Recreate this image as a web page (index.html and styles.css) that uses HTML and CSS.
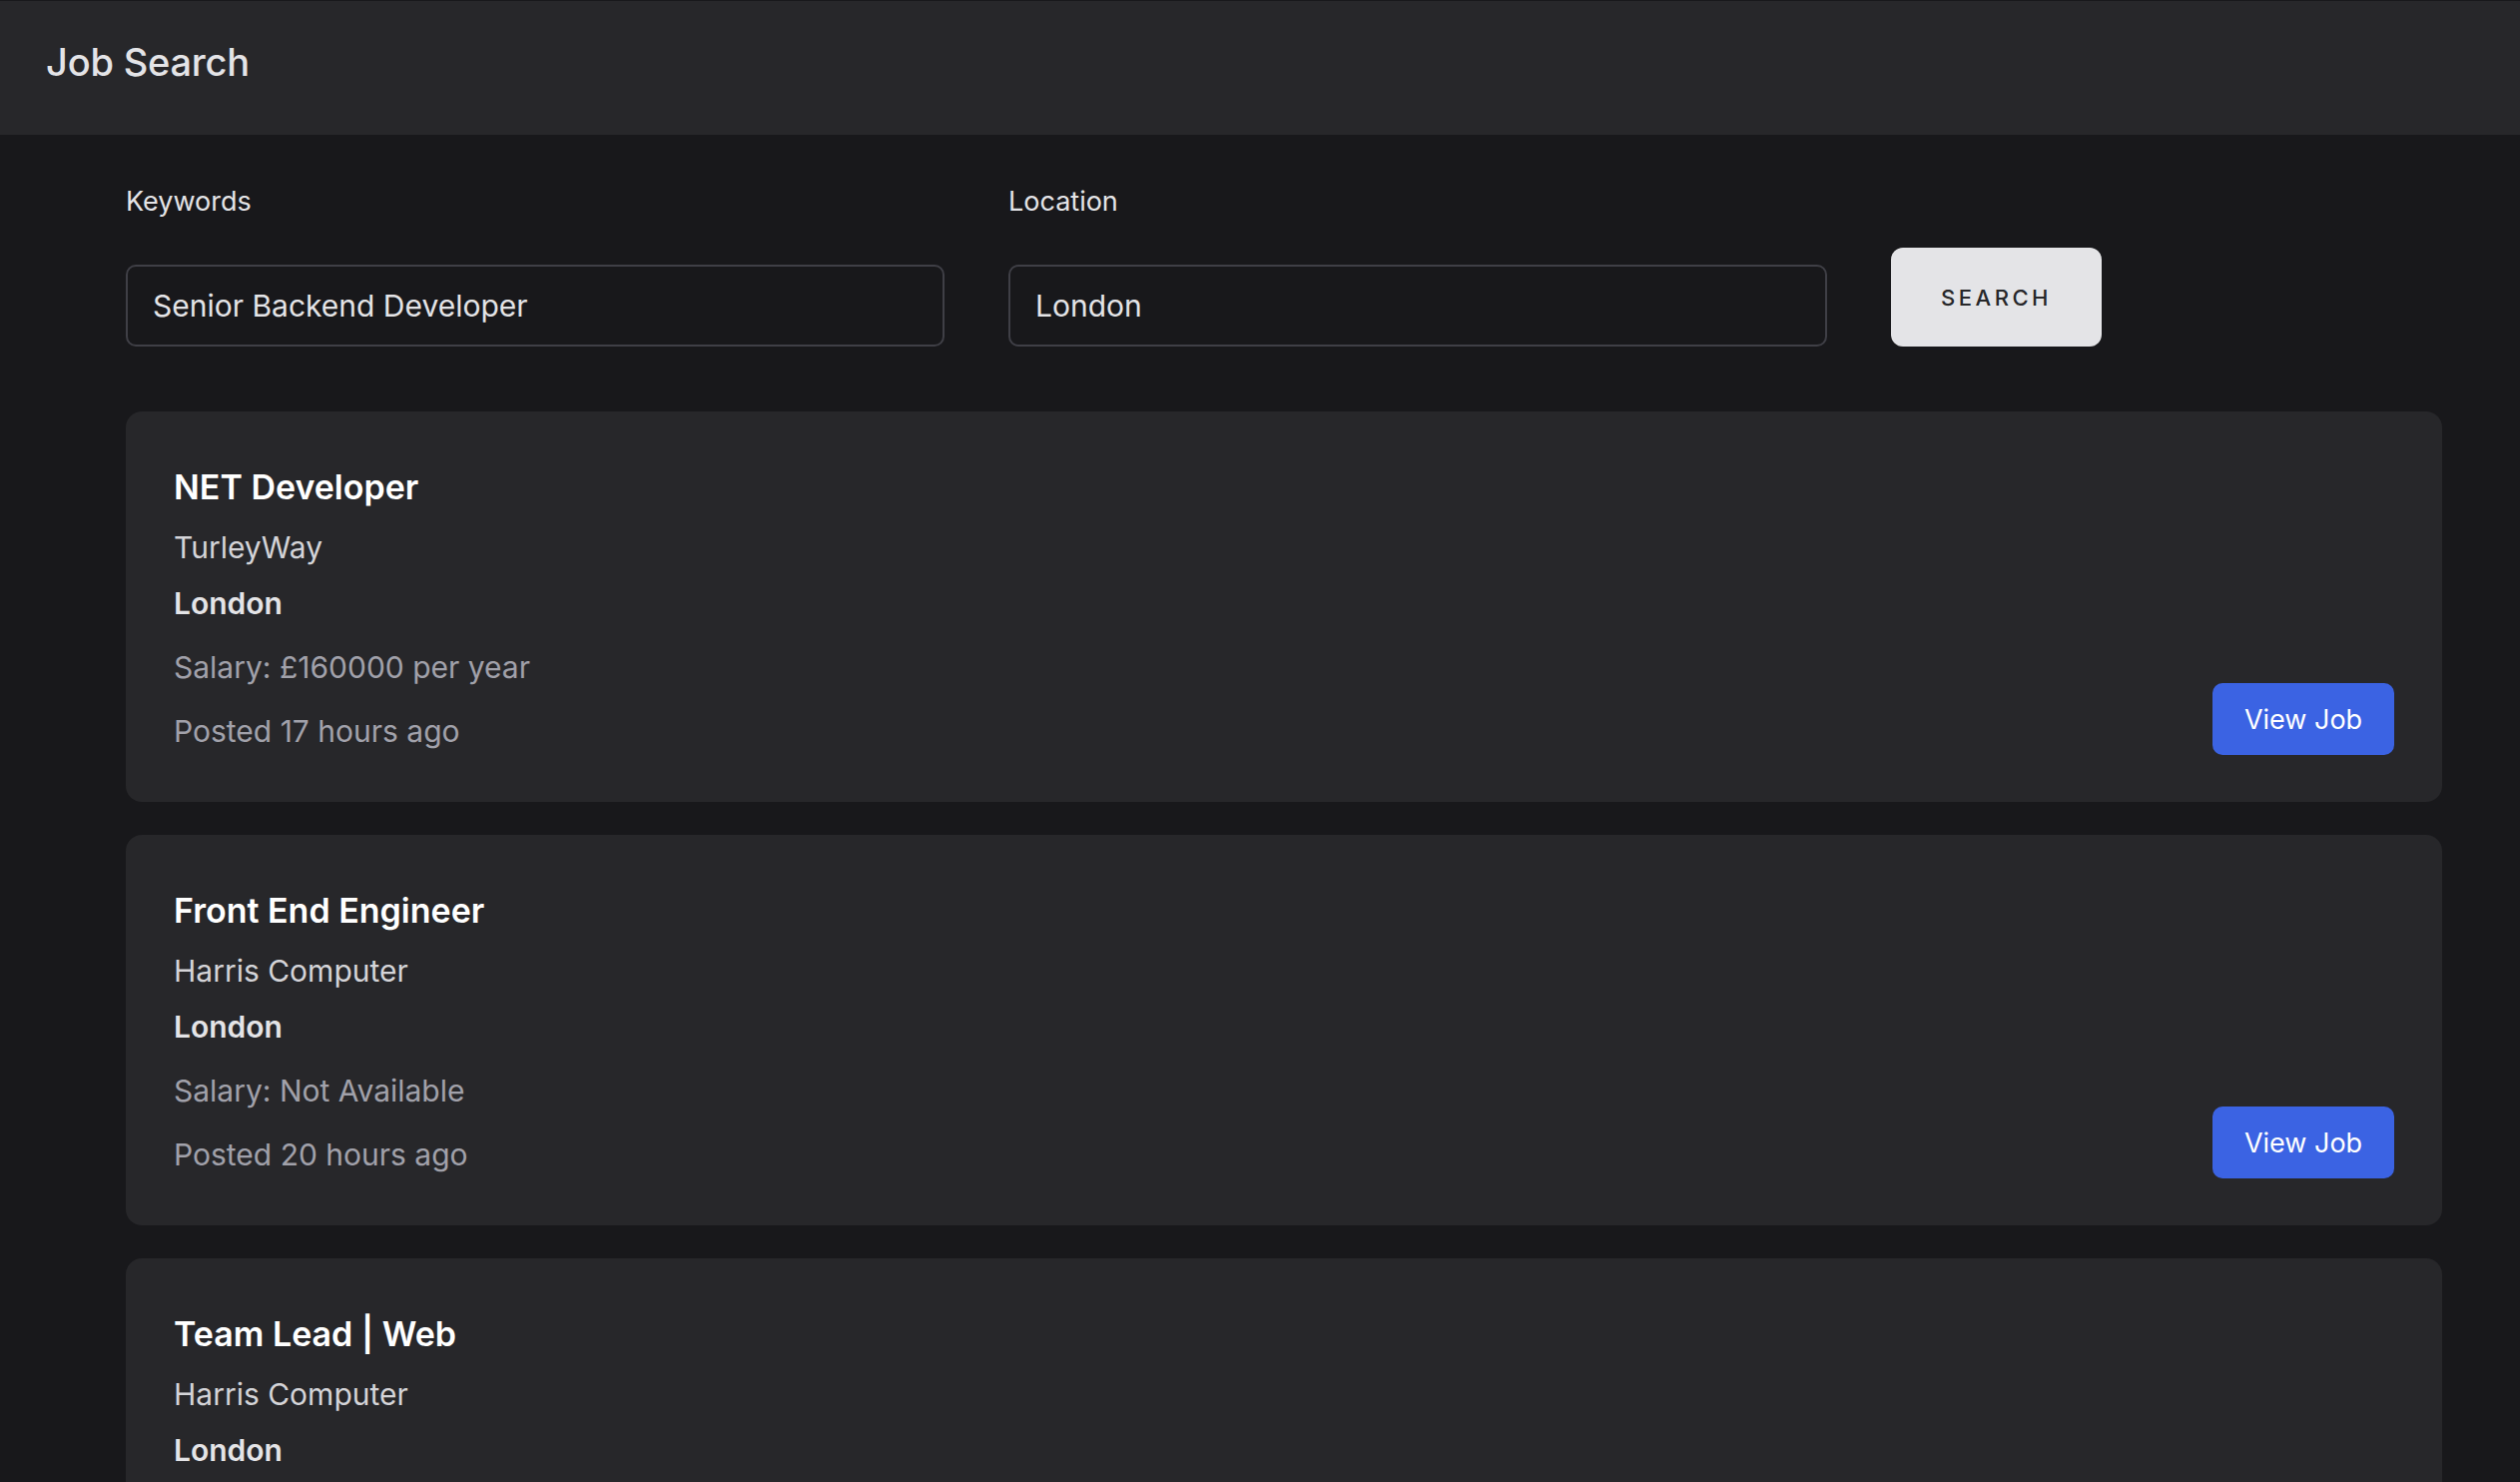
FILE: index.html
```html
<!DOCTYPE html>
<html lang="en">
<head>
    <meta charset="UTF-8">
    <meta name="viewport" content="width=device-width, initial-scale=1.0">
    <title>Job Search</title>
    <link rel="stylesheet" href="styles.css">
</head>
<body>
    <header class="app-bar">
        <h1>Job Search</h1>
    </header>
    <main class="content">
        <form class="search-form" onsubmit="return false">
            <div class="field">
                <label for="keywords">Keywords</label>
                <input type="text" id="keywords" value="Senior Backend Developer">
            </div>
            <div class="field">
                <label for="location">Location</label>
                <input type="text" id="location" value="London">
            </div>
            <button type="submit" class="search-button">Search</button>
        </form>

        <div class="job-list">
            <div class="job-card">
                <div class="job-info">
                    <h2 class="job-title">NET Developer</h2>
                    <p class="job-company">TurleyWay</p>
                    <p class="job-location">London</p>
                    <p class="job-meta">Salary: £160000 per year</p>
                    <p class="job-meta">Posted 17 hours ago</p>
                </div>
                <a href="#" class="view-button">View Job</a>
            </div>
            <div class="job-card">
                <div class="job-info">
                    <h2 class="job-title">Front End Engineer</h2>
                    <p class="job-company">Harris Computer</p>
                    <p class="job-location">London</p>
                    <p class="job-meta">Salary: Not Available</p>
                    <p class="job-meta">Posted 20 hours ago</p>
                </div>
                <a href="#" class="view-button">View Job</a>
            </div>
            <div class="job-card">
                <div class="job-info">
                    <h2 class="job-title">Team Lead | Web</h2>
                    <p class="job-company">Harris Computer</p>
                    <p class="job-location">London</p>
                    <p class="job-meta">Salary: Not Available</p>
                    <p class="job-meta">Posted 20 hours ago</p>
                </div>
                <a href="#" class="view-button">View Job</a>
            </div>
        </div>
    </main>
</body>
</html>
```

FILE: styles.css
```css
* {
    margin: 0;
    padding: 0;
    box-sizing: border-box;
    font-family: 'Inter', 'Noto Sans', sans-serif;
}

body {
    min-height: 100vh;
    background: #18181b;
    color: #e4e4e7;
    border-top: 1px solid #18181b;
}

.app-bar {
    height: 134px;
    background: #27272a;
    display: flex;
    align-items: center;
    padding: 0 0 12px 46px;
}

.app-bar h1 {
    font-size: 38px;
    font-weight: 500;
    color: #e4e4e7;
    letter-spacing: -0.2px;
}

.content {
    padding: 49px 78px 40px 126px;
}

.search-form {
    display: flex;
    align-items: flex-end;
    gap: 64px;
}

.field {
    width: 820px;
}

.field label {
    display: block;
    font-size: 27px;
    line-height: 36px;
    color: #e4e4e7;
    margin-bottom: 45px;
}

.field input {
    width: 100%;
    height: 82px;
    padding: 0 25px;
    background: #18181b;
    border: 2px solid #3f3f46;
    border-radius: 10px;
    color: #e4e4e7;
    font-size: 30px;
    outline: none;
}

.search-button {
    width: 211px;
    height: 99px;
    background: #e4e4e7;
    border: none;
    border-radius: 12px;
    color: #27272a;
    font-size: 22px;
    font-weight: 500;
    letter-spacing: 3.5px;
    text-transform: uppercase;
    cursor: pointer;
}

.job-list {
    margin-top: 65px;
    display: flex;
    flex-direction: column;
    gap: 33px;
}

.job-card {
    background: #27272a;
    border-radius: 16px;
    padding: 48px 48px 47px;
    display: flex;
    justify-content: space-between;
    align-items: flex-end;
}

.job-info {
    padding-bottom: 4px;
}

.job-title {
    font-size: 34px;
    line-height: 56px;
    font-weight: 600;
    color: #fff;
}

.job-company {
    font-size: 30px;
    line-height: 40px;
    margin-top: 12px;
    color: #d4d4d8;
}

.job-location {
    font-size: 30px;
    line-height: 40px;
    margin-top: 16px;
    font-weight: 600;
    color: #e4e4e7;
}

.job-meta {
    font-size: 30px;
    line-height: 40px;
    margin-top: 24px;
    color: #a1a1aa;
}

.view-button {
    display: inline-flex;
    align-items: center;
    justify-content: center;
    width: 182px;
    height: 72px;
    background: #3b63e3;
    border-radius: 10px;
    color: #fff;
    font-size: 27px;
    text-decoration: none;
}
```
